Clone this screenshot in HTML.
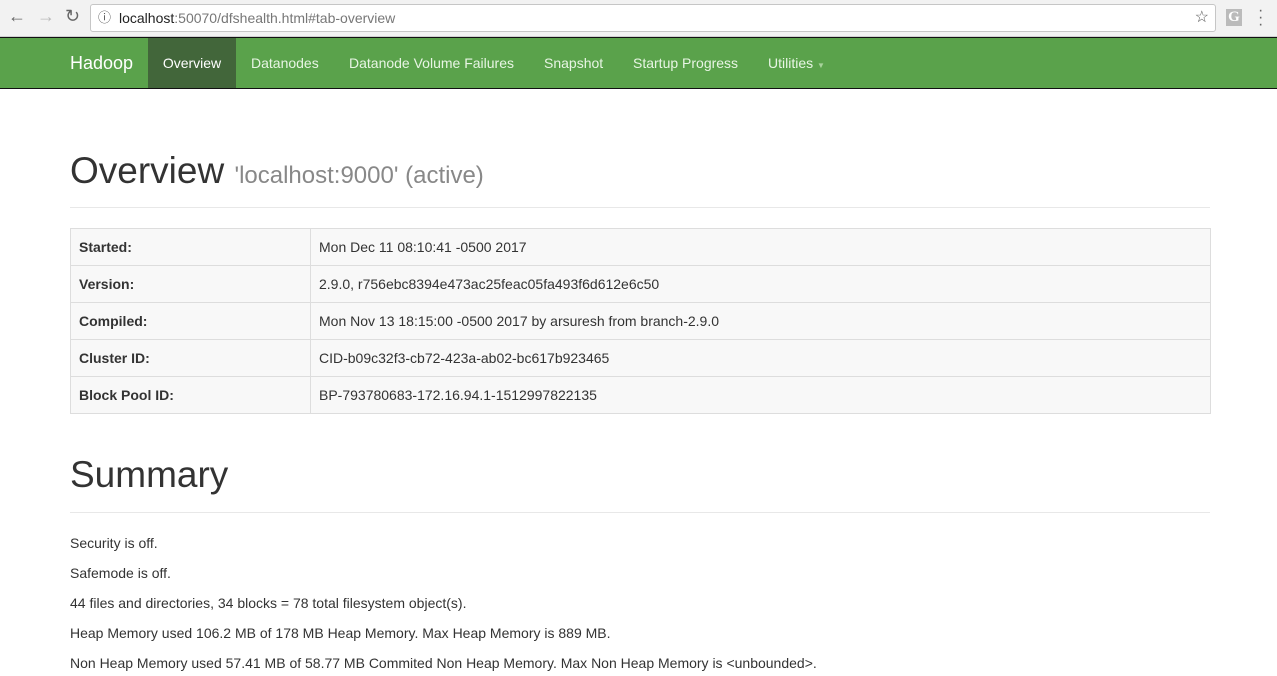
<!DOCTYPE html>
<html><head><style>
body{margin:0;width:1277px;height:676px;overflow:hidden;font-family:"Liberation Sans",Arial,sans-serif;color:#333;font-size:14px;background:#fff}
.chrome{height:36px;background:#f2f2f2;position:relative;border-bottom:1px solid #d0d0d0}
.url{position:absolute;left:90px;top:4px;width:1124px;height:26px;border:1px solid #c6c6c6;border-radius:3px;background:#fff;font-size:14px;line-height:26px}
.url .t{position:absolute;left:28px;color:#777}.url .t b{color:#222;font-weight:normal}
.ic{position:absolute;color:#666;font-size:18px;top:6px}
nav{position:absolute;top:37px;left:0;width:1277px;height:50px;background:#5aa24b;border-top:1px solid #111;border-bottom:1px solid #111}
nav a{position:absolute;top:0;height:50px;line-height:50px;color:#e8f5e4;font-size:14px}
nav .brand{left:70px;font-size:18px;color:#fff}
nav .act{left:148px;width:88px;background:#42663a;color:#fff;text-align:center}
h1{position:absolute;left:70px;margin:0;font-weight:normal;font-size:37px;color:#333}
h1 small{font-size:24px;color:#888}
.hr{position:absolute;left:70px;width:1140px;height:1px;background:#e8e8e8}
table{position:absolute;left:70px;top:228px;width:1141px;border-collapse:collapse}
td{border:1px solid #ddd;height:36px;padding:0 8px;background:#f8f8f8;font-size:14px}
td:first-child{width:223px;font-weight:bold}
p{position:absolute;left:70px;margin:0}
</style></head><body>
<div class="chrome">
<span class="ic" style="left:8px">←</span><span class="ic" style="left:37px;color:#bbb">→</span><span class="ic" style="left:65px">↻</span>
<div class="url"><span style="position:absolute;left:7px;font-size:13px;color:#555">ⓘ</span><span class="t"><b>localhost</b>:50070/dfshealth.html#tab-overview</span><span style="position:absolute;right:6px;color:#555;font-size:16px">☆</span></div>
<span style="position:absolute;left:1226px;top:9px;width:16px;height:17px;background:#bbb;color:#fff;font:bold 15px 'Liberation Serif',serif;text-align:center;line-height:17px">G</span>
<span style="position:absolute;left:1258px;top:7px;color:#666;font-size:16px;line-height:7px">·<br>·<br>·</span>
</div>
<nav><a class="brand">Hadoop</a><a class="act">Overview</a><a style="left:251px">Datanodes</a><a style="left:349px">Datanode Volume Failures</a><a style="left:544px">Snapshot</a><a style="left:633px">Startup Progress</a><a style="left:768px">Utilities <span style="font-size:8px;color:#a8d39c">▼</span></a></nav>
<h1 style="top:150px">Overview <small>'localhost:9000' (active)</small></h1>
<div class="hr" style="top:207px"></div>
<table>
<tr><td>Started:</td><td>Mon Dec 11 08:10:41 -0500 2017</td></tr>
<tr><td>Version:</td><td>2.9.0, r756ebc8394e473ac25feac05fa493f6d612e6c50</td></tr>
<tr><td>Compiled:</td><td>Mon Nov 13 18:15:00 -0500 2017 by arsuresh from branch-2.9.0</td></tr>
<tr><td>Cluster ID:</td><td>CID-b09c32f3-cb72-423a-ab02-bc617b923465</td></tr>
<tr><td>Block Pool ID:</td><td>BP-793780683-172.16.94.1-1512997822135</td></tr>
</table>
<h1 style="top:454px">Summary</h1>
<div class="hr" style="top:512px"></div>
<p style="top:535px">Security is off.</p>
<p style="top:565px">Safemode is off.</p>
<p style="top:595px">44 files and directories, 34 blocks = 78 total filesystem object(s).</p>
<p style="top:625px">Heap Memory used 106.2 MB of 178 MB Heap Memory. Max Heap Memory is 889 MB.</p>
<p style="top:655px">Non Heap Memory used 57.41 MB of 58.77 MB Commited Non Heap Memory. Max Non Heap Memory is &lt;unbounded&gt;.</p>
</body></html>
